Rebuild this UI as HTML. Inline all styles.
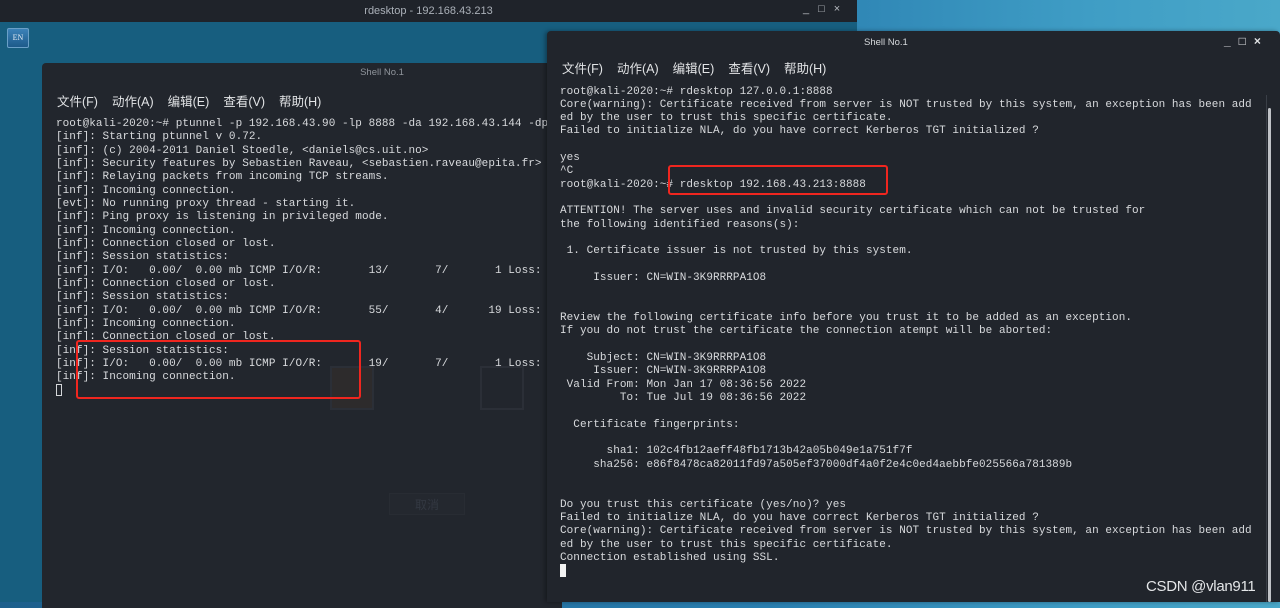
<!DOCTYPE html>
<html><head><meta charset="utf-8"><style>
*{margin:0;padding:0;box-sizing:border-box}
body{width:1280px;height:602px;overflow:hidden;position:relative;background:linear-gradient(90deg,#1d5f8c 0%,#2a7fb0 60%,#3f9dc5 85%,#4aa8c9 100%);font-family:"Liberation Sans","Noto Sans CJK SC",sans-serif}
.abs{position:absolute}
pre{font-family:"Liberation Mono","DejaVu Sans Mono",monospace;font-size:11px;letter-spacing:0.05px;line-height:13.33px;color:#d8dadd;white-space:pre}
.menu{font-size:12.5px;color:#e2e4e6;word-spacing:0}
.menu span{margin-right:14px}
</style></head><body>
<div class="abs" style="left:0;top:0;width:857px;height:602px;background:#175e7f"></div>
<div class="abs" style="left:0;top:0;width:857px;height:22px;background:#1f232a;color:#aab0b8;font-size:11px;text-align:center;line-height:22px">rdesktop - 192.168.43.213</div>
<div class="abs" style="left:803px;top:3px;color:#b8bcc2;font-size:11px;letter-spacing:9px">_□×</div>
<div class="abs" style="left:7px;top:28px;width:22px;height:20px;background:linear-gradient(#3c82b8,#1d5a8a);border:1px solid #6aa0c8;border-radius:2px;color:#e6eef6;font-size:8px;line-height:18px;text-align:center;font-family:'Liberation Serif',serif">EN</div>
<div class="abs" style="left:42px;top:63px;width:520px;height:545px;background:#22262d;border-radius:4px 0 0 0"></div>
<div class="abs" style="left:42px;top:67px;width:680px;text-align:center;color:#8f949b;font-size:9.5px">Shell No.1</div>
<div class="abs menu" style="left:57px;top:91px"><span>文件(F)</span><span>动作(A)</span><span>编辑(E)</span><span>查看(V)</span><span>帮助(H)</span></div>
<div class="abs" style="left:330px;top:366px;width:44px;height:44px;border:2px solid #2b2f37;background:#2d2b2c"></div>
<div class="abs" style="left:480px;top:366px;width:44px;height:44px;border:2px solid #2b2f37"></div>
<div class="abs" style="left:389px;top:493px;width:76px;height:22px;border:1px solid #282c33;background:#24282f;color:#333842;font-size:12px;text-align:center;line-height:22px">取消</div>
<pre class="abs" style="left:56px;top:118px">root@kali-2020:~# ptunnel -p 192.168.43.90 -lp 8888 -da 192.168.43.144 -dp
[inf]: Starting ptunnel v 0.72.
[inf]: (c) 2004-2011 Daniel Stoedle, &lt;daniels@cs.uit.no&gt;
[inf]: Security features by Sebastien Raveau, &lt;sebastien.raveau@epita.fr&gt;
[inf]: Relaying packets from incoming TCP streams.
[inf]: Incoming connection.
[evt]: No running proxy thread - starting it.
[inf]: Ping proxy is listening in privileged mode.
[inf]: Incoming connection.
[inf]: Connection closed or lost.
[inf]: Session statistics:
[inf]: I/O:   0.00/  0.00 mb ICMP I/O/R:       13/       7/       1 Loss:
[inf]: Connection closed or lost.
[inf]: Session statistics:
[inf]: I/O:   0.00/  0.00 mb ICMP I/O/R:       55/       4/      19 Loss:
[inf]: Incoming connection.
[inf]: Connection closed or lost.
[inf]: Session statistics:
[inf]: I/O:   0.00/  0.00 mb ICMP I/O/R:       19/       7/       1 Loss:
[inf]: Incoming connection.
</pre>
<div class="abs" style="left:56px;top:384px;width:6px;height:12px;border:1px solid #d4d6d9"></div>
<div class="abs" style="left:76px;top:340px;width:285px;height:59px;border:2px solid #f0261f;border-radius:3px"></div>
<div class="abs" style="left:547px;top:31px;width:733px;height:571px;background:#21252c;border-radius:4px 4px 0 0;box-shadow:-2px 0 4px rgba(0,0,0,.35)"></div>
<div class="abs" style="left:864px;top:37px;color:#d6d9dc;font-size:9.5px">Shell No.1</div>
<div class="abs" style="left:1224px;top:34px;color:#e0e2e4;font-size:12px;font-weight:bold;letter-spacing:8px">_□×</div>
<div class="abs menu" style="left:562px;top:58px"><span>文件(F)</span><span>动作(A)</span><span>编辑(E)</span><span>查看(V)</span><span>帮助(H)</span></div>
<div class="abs" style="left:1266px;top:95px;width:1px;height:507px;background:#3a3f47"></div>
<div class="abs" style="left:1268px;top:108px;width:3px;height:494px;background:#c0c3c7;border-radius:2px"></div>
<pre class="abs" style="left:560px;top:85.5px">root@kali-2020:~# rdesktop 127.0.0.1:8888
Core(warning): Certificate received from server is NOT trusted by this system, an exception has been add
ed by the user to trust this specific certificate.
Failed to initialize NLA, do you have correct Kerberos TGT initialized ?

yes
^C
root@kali-2020:~# rdesktop 192.168.43.213:8888

ATTENTION! The server uses and invalid security certificate which can not be trusted for
the following identified reasons(s):

 1. Certificate issuer is not trusted by this system.

     Issuer: CN=WIN-3K9RRRPA1O8


Review the following certificate info before you trust it to be added as an exception.
If you do not trust the certificate the connection atempt will be aborted:

    Subject: CN=WIN-3K9RRRPA1O8
     Issuer: CN=WIN-3K9RRRPA1O8
 Valid From: Mon Jan 17 08:36:56 2022
         To: Tue Jul 19 08:36:56 2022

  Certificate fingerprints:

       sha1: 102c4fb12aeff48fb1713b42a05b049e1a751f7f
     sha256: e86f8478ca82011fd97a505ef37000df4a0f2e4c0ed4aebbfe025566a781389b


Do you trust this certificate (yes/no)? yes
Failed to initialize NLA, do you have correct Kerberos TGT initialized ?
Core(warning): Certificate received from server is NOT trusted by this system, an exception has been add
ed by the user to trust this specific certificate.
Connection established using SSL.
</pre>
<div class="abs" style="left:560px;top:564px;width:6px;height:13px;background:#f2f2f2"></div>
<div class="abs" style="left:668px;top:165px;width:220px;height:30px;border:2px solid #f0261f;border-radius:3px"></div>
<div class="abs" style="left:1146px;top:578px;color:#e4e6e8;font-size:15px;letter-spacing:-0.3px">CSDN @vlan911</div>
</body></html>
